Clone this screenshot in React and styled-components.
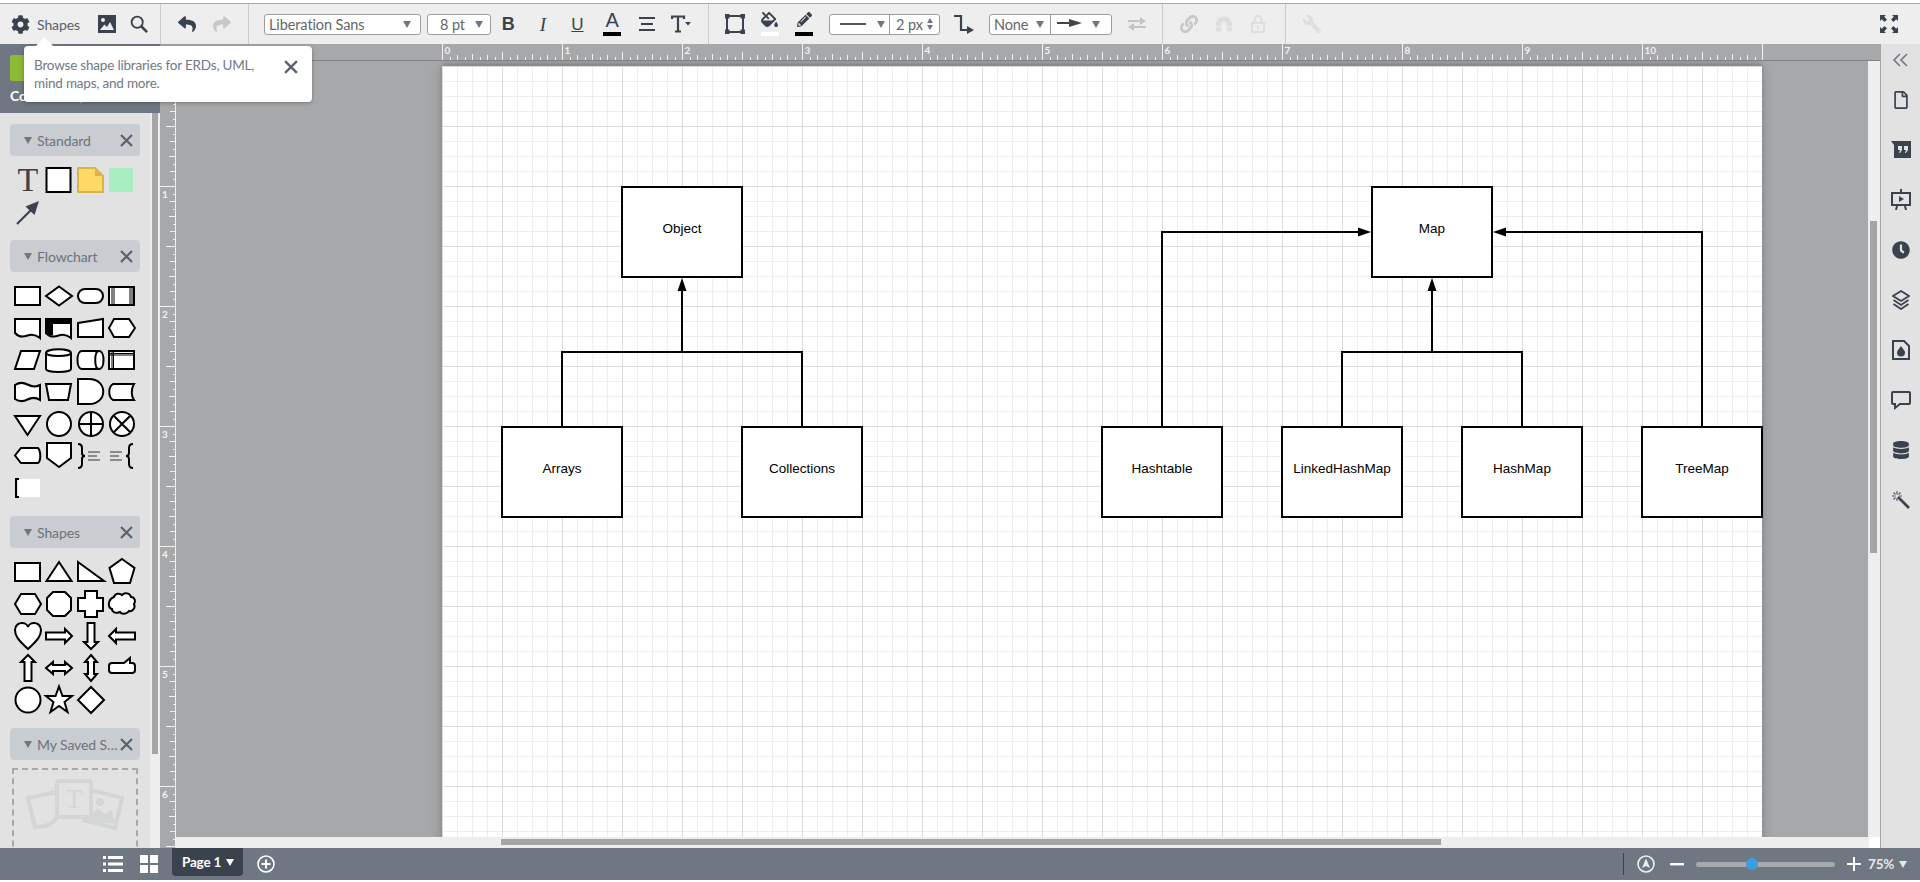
import React from "react";
import styled, { createGlobalStyle } from "styled-components";
import {
  FaCog,
  FaReply,
  FaShare,
  FaFillDrip,
  FaPencilAlt,
  FaLink,
  FaMagnet,
  FaWrench,
  FaRegFile,
  FaClock,
  FaDatabase
} from "react-icons/fa";

const UI_FONT = `"Lato", "Noto Sans", sans-serif`;
const DARK = "#3a424e";

const GlobalStyle = createGlobalStyle`
  html, body { margin: 0; padding: 0; height: 100%; overflow: hidden; background: #fff; }
  body { font-family: ${UI_FONT}; }
  * { box-sizing: border-box; }
`;

const Screen = styled.div`
  display: flex;
  flex-direction: column;
  width: 1920px;
  height: 882px;
  overflow: hidden;
  position: relative;
  background: #fff;
`;

/* ---------- toolbar ---------- */

const Toolbar = styled.div`
  display: flex;
  flex: none;
  height: 42px;
  margin-top: 3px;
  margin-bottom: -1px;
  background: #eee;
  border-top: 1px solid #aaa;
  border-bottom: 1px solid #999;
`;

const Group = styled.div`
  display: flex;
  align-items: center;
  flex: ${p => (p.$grow ? "1" : "none")};
  width: ${p => (p.$w ? `${p.$w}px` : "auto")};
  padding-left: ${p => p.$pad || 0}px;
  padding-right: ${p => p.$padRight || 0}px;
  border-right: ${p => (p.$grow ? "none" : "1px solid #ccc")};
`;

const ToolButton = styled.div`
  display: flex;
  align-items: center;
  justify-content: center;
  position: relative;
  flex: none;
  width: ${p => p.$w || 34.6}px;
  height: 40px;
  color: ${p => p.$color || DARK};
  font-size: ${p => p.$size || 18}px;
  margin-left: ${p => p.$left || 0}px;
`;

const ShapesLabel = styled.span`
  font-size: 14px;
  letter-spacing: -0.1px;
  color: #59616e;
  width: 42px;
  flex: none;
`;

const SelectBox = styled.div`
  display: flex;
  align-items: center;
  flex: none;
  width: ${p => p.$w}px;
  height: 21px;
  margin-left: ${p => p.$left || 0}px;
  background: #fff;
  border: 1px solid #9d9d9d;
  border-radius: 3px;
  font-size: 14.5px;
  letter-spacing: -0.1px;
  color: #666;
  overflow: hidden;
`;

const SelectPart = styled.div`
  display: flex;
  align-items: center;
  justify-content: space-between;
  height: 100%;
  flex: ${p => (p.$w ? "none" : "1")};
  width: ${p => (p.$w ? `${p.$w}px` : "auto")};
  padding: 0 ${p => p.$padRight || 9}px 0 ${p => p.$pad || 4}px;
  border-right: ${p => (p.$split ? "1px solid #9d9d9d" : "none")};
`;

const Caret = styled.i`
  flex: none;
  display: block;
  width: 0;
  height: 0;
  border-left: 4px solid transparent;
  border-right: 4px solid transparent;
  border-top: 7px solid ${p => p.$color || "#6f7783"};
`;

const Stepper = styled.div`
  display: flex;
  flex-direction: column;
  gap: 2px;
  & > i {
    display: block;
    width: 0;
    height: 0;
    border-left: 3px solid transparent;
    border-right: 3px solid transparent;
  }
  & > i:first-child { border-bottom: 5px solid #6f7783; }
  & > i:last-child { border-top: 5px solid #6f7783; }
`;

const Glyph = styled.span`
  font-family: ${p => p.$family || `"Liberation Sans", sans-serif`};
  font-size: ${p => p.$size || 17}px;
  font-weight: ${p => (p.$bold ? 700 : 400)};
  font-style: ${p => (p.$italic ? "italic" : "normal")};
  text-decoration: ${p => (p.$under ? "underline" : "none")};
  margin-bottom: ${p => p.$lift || 0}px;
  color: ${DARK};
  line-height: 1;
`;

const ColorBar = styled.i`
  position: absolute;
  left: 50%;
  bottom: 8px;
  width: 18px;
  height: 4px;
  margin-left: -9px;
  background: ${p => p.$color};
`;

const Lifted = styled.span`
  display: flex;
  margin-bottom: 9px;
`;

/* ---------- sidebar ---------- */

const Main = styled.div`
  display: flex;
  flex: 1;
  min-height: 0;
`;

const Sidebar = styled.div`
  display: flex;
  flex-direction: column;
  flex: none;
  width: 160px;
  background: #e2e2e2;
`;

const DocHeader = styled.div`
  flex: none;
  height: 69px;
  padding: 11px 10px 0;
  background: #6f7783;
  color: #fff;
`;

const DocLogo = styled.div`
  width: 40px;
  height: 26px;
  background: #8dbb35;
  border-radius: 2px;
`;

const DocTitle = styled.div`
  margin-top: 6px;
  font-size: 14px;
  font-weight: 700;
  white-space: nowrap;
`;

const SidebarBody = styled.div`
  display: flex;
  flex: 1;
  min-height: 0;
`;

const LibraryList = styled.div`
  flex: 1;
  padding: 11px 10px 0;
  overflow: hidden;
`;

const SideScroll = styled.div`
  flex: none;
  width: 10px;
  padding: 0 2px;
  background: #eee;
`;

const SideThumb = styled.div`
  height: 641px;
  background: #a5a5a5;
`;

const LibHeader = styled.div`
  display: flex;
  align-items: center;
  height: 32px;
  padding: 0 7px 0 14px;
  background: #c9ccd0;
  border-radius: 4px;
  color: #6d737d;
  font-size: 14px;
  letter-spacing: -0.1px;
`;

const LibName = styled.span`
  flex: 1;
  margin-left: 5px;
  white-space: nowrap;
`;

const Cross = styled.svg`
  display: block;
  flex: none;
  fill: none;
  stroke: #5c626b;
  stroke-width: 2.2;
`;

const ShapeGrid = styled.div`
  display: grid;
  grid-template-columns: repeat(4, 31.4px);
  grid-auto-rows: 32px;
  margin: 0 -10px 0 2px;
  padding: 8px 0 12px;
`;

const ShapeSvg = styled.svg`
  display: block;
  width: 32px;
  height: 32px;
  overflow: visible;
  fill: #fff;
  stroke: #000;
  stroke-width: 2;
  stroke-linejoin: miter;
`;

const TextTool = styled.div`
  width: 32px;
  height: 32px;
  text-align: center;
  font-family: "Liberation Serif", serif;
  font-size: 34px;
  line-height: 32px;
  color: ${DARK};
`;

const DropBox = styled.div`
  height: 120px;
  margin: 8px 2px 0;
  padding-top: 8px;
  border: 2px dashed #a8a8a8;
  text-align: center;
  font-size: 14px;
  color: #8a8f96;
  white-space: nowrap;
  overflow: hidden;
`;

const DropArt = styled.svg`
  display: block;
  width: 100px;
  height: 54px;
  margin: 0 auto 12px;
`;

/* ---------- tooltip ---------- */

const Tip = styled.div`
  position: absolute;
  left: 24px;
  top: 46px;
  width: 288px;
  height: 56px;
  padding: 10px;
  background: #fff;
  border-radius: 4px;
  box-shadow: 0 1px 4px rgba(0, 0, 0, 0.3);
  font-size: 13.5px;
  letter-spacing: -0.2px;
  line-height: 18px;
  color: #717987;
  z-index: 5;
  &::before {
    content: "";
    position: absolute;
    left: 14px;
    top: -6px;
    width: 13px;
    height: 13px;
    background: #fff;
    transform: rotate(45deg);
  }
`;

const TipText = styled.div`
  position: relative;
  width: 240px;
`;

const TipClose = styled.span`
  position: absolute;
  right: 14px;
  top: 14px;
`;

/* ---------- canvas ---------- */

const Workspace = styled.div`
  flex: 1;
  min-width: 0;
  display: grid;
  grid-template-columns: 16px 1fr 12px;
  grid-template-rows: 17px 1fr 11px;
`;

const HRuler = styled.svg`
  grid-column: 1 / 4;
  display: block;
  width: 1720px;
  height: 17px;
  background: #a7a8aa;
  border-bottom: 1px solid #808184;
`;

const VRuler = styled.svg`
  grid-row: 2 / 4;
  display: block;
  width: 16px;
  height: 787px;
  background: #a7a8aa;
`;

const RulerText = styled.text`
  font-family: ${UI_FONT};
  font-size: 10px;
  font-weight: 700;
  fill: #f2f2f2;
`;

const Viewport = styled.div`
  position: relative;
  overflow: hidden;
  background: #a7a8aa;
  padding: 5px 0 0 266px;
`;

const Page = styled.div`
  position: relative;
  width: 1320px;
  height: 1100px;
  background-color: #fff;
  background-image:
    linear-gradient(to right, #dcdcdc 1px, transparent 1px),
    linear-gradient(to bottom, #dcdcdc 1px, transparent 1px),
    linear-gradient(to right, #eee 1px, transparent 1px),
    linear-gradient(to bottom, #eee 1px, transparent 1px);
  background-size: 60px 60px, 60px 60px, 15px 15px, 15px 15px;
  box-shadow: 0 0 12px rgba(0, 0, 0, 0.22), 0 -3px 3px rgba(0, 0, 0, 0.1);
`;

const Wires = styled.svg`
  position: absolute;
  left: 0;
  top: 0;
  width: 1320px;
  height: 600px;
  fill: none;
  stroke: #000;
  stroke-width: 2;
`;

const Node = styled.div`
  position: absolute;
  left: ${p => p.$x - 1}px;
  top: ${p => p.$y}px;
  width: 122px;
  height: 92px;
  display: flex;
  align-items: center;
  justify-content: center;
  padding-bottom: 7px;
  background: #fff;
  border: 2px solid #000;
  font-family: "Liberation Sans", Arial, sans-serif;
  font-size: 13.5px;
  color: #000;
`;

const VScroll = styled.div`
  padding: 160px 3px 0 2px;
  background: #eee;
`;

const VThumb = styled.div`
  height: 332px;
  background: #a5a5a5;
`;

const HScroll = styled.div`
  padding: 2px 0 3px 325px;
  background: #eee;
`;

const HThumb = styled.div`
  width: 940px;
  height: 6px;
  background: #a5a5a5;
`;

const Corner = styled.div`
  background: #fff;
  border-left: 1px solid #eee;
`;

/* ---------- right rail ---------- */

const Rail = styled.div`
  flex: none;
  width: 40px;
  background: #e2e2e2;
  border-left: 1px solid #a5a5a5;
  color: ${DARK};
`;

const RailToggle = styled.div`
  display: flex;
  align-items: center;
  justify-content: center;
  height: 31px;
  color: #6f7783;
`;

const RailItem = styled.div`
  display: flex;
  align-items: center;
  justify-content: center;
  height: 50px;
  font-size: 18px;
`;

/* ---------- bottom bar ---------- */

const BottomBar = styled.div`
  display: flex;
  align-items: flex-start;
  flex: none;
  height: 32px;
  padding-left: 95px;
  background: #6f7783;
  color: #fff;
`;

const BarButton = styled.div`
  display: flex;
  align-items: center;
  justify-content: center;
  flex: none;
  width: ${p => p.$w || 36}px;
  height: 32px;
  margin-left: ${p => p.$left || 0}px;
`;

const PageTab = styled.div`
  display: flex;
  align-items: center;
  flex: none;
  gap: 5px;
  width: 71px;
  height: 28px;
  margin-left: 5px;
  padding-left: 10px;
  background: ${DARK};
  border-radius: 0 0 4px 4px;
  font-size: 13.5px;
  font-weight: 700;
  letter-spacing: -0.2px;
`;

const ZoomTools = styled.div`
  display: flex;
  align-items: center;
  height: 32px;
  margin-left: auto;
  padding-right: 13px;
`;

const BarRule = styled.i`
  display: block;
  width: 1px;
  height: 22px;
  background: #3a424e;
`;

const SliderTrack = styled.div`
  position: relative;
  flex: none;
  width: 139px;
  height: 5px;
  margin-left: 10px;
  background: #a5a8ad;
  border-radius: 3px;
`;

const SliderThumb = styled.i`
  position: absolute;
  left: 40%;
  top: -4px;
  width: 12px;
  height: 12px;
  margin-left: -6px;
  background: #3a9fe0;
  border-radius: 50%;
`;

const ZoomValue = styled.span`
  flex: none;
  width: 27px;
  margin: 0 4px 0 5px;
  font-size: 13.5px;
  font-weight: 700;
  letter-spacing: -0.2px;
  color: #e8e8e8;
`;

const BottomEdge = styled.div`
  flex: none;
  height: 2px;
  background: #fff;
`;

/* ---------- drawings ---------- */

const Ico = ({ w = 20, h = 20, vb = "0 0 20 20", children, color = "currentColor" }) => (
  <svg width={w} height={h} viewBox={vb} fill={color} stroke="none" style={{ display: "block" }}>
    {children}
  </svg>
);

const CloseMark = ({ size = 13 }) => (
  <Cross width={size} height={size} viewBox="0 0 13 13">
    <path d="M1 1L12 12M12 1L1 12" />
  </Cross>
);

const bracket = d => <path d={d} fill="none" strokeWidth="2" />;
const grayLines = x => (
  <path stroke="#8a8a8a" strokeWidth="1.8" fill="none" d={`M${x} 12h12M${x} 16h9M${x} 20h12`} />
);

const STANDARD = [
  <TextTool key="t">T</TextTool>,
  <ShapeSvg key="r"><rect x="3.5" y="4" width="24" height="24" /></ShapeSvg>,
  <ShapeSvg key="n" style={{ stroke: "#d9b44a" }}>
    <path d="M3 4H20L28 12V28H3Z" fill="#ffd966" />
    <path d="M20 4V12H28Z" fill="#d9b44a" stroke="none" />
  </ShapeSvg>,
  <ShapeSvg key="g" style={{ stroke: "none" }}><rect x="3" y="4" width="24" height="24" fill="#a9eec0" /></ShapeSvg>,
  <ShapeSvg key="a" style={{ stroke: DARK, fill: DARK }}>
    <path d="M5 28L20 13" strokeWidth="2.2" fill="none" />
    <path d="M27 5L22.5 19L13.5 10.5Z" stroke="none" />
  </ShapeSvg>
];

const FLOWCHART = [
  <rect x="3" y="7" width="25" height="18" />,
  <path d="M16 6.5L29 16L16 25.5L3 16Z" />,
  <rect x="3" y="9" width="25" height="14" rx="7" />,
  <g><rect x="3" y="7" width="25" height="18" /><path d="M6 7V25M8 7V25M24 7V25M26 7V25" strokeWidth="1" /></g>,
  <path d="M3 7H28V26Q22 21 15.5 23.5Q8 26.5 3 21Z" />,
  <g><path d="M3 7H28V26Q22 21 15.5 23.5Q8 26.5 3 21Z" /><path d="M3 7H28V11H9V22H6L3 21Z" fill="#000" /></g>,
  <path d="M3 11L28 7V25H3Z" />,
  <path d="M8 7H23L29 16L23 25H8L3 16Z" />,
  <path d="M9 7H28L22 25H3Z" />,
  <g><path d="M3 9C3 4 28 4 28 9V25C28 29 3 29 3 25Z" /><path d="M3 9C3 13 28 13 28 9" fill="none" /></g>,
  <g><path d="M7 7H24C30 7 30 25 24 25H7C1 25 1 7 7 7Z" /><path d="M24 7C19 7 19 25 24 25" fill="none" /></g>,
  <g><rect x="3" y="7" width="25" height="18" /><path d="M3 9.5H28M3 11H28M6 7V25M7.5 7V25" fill="none" strokeWidth="1" /></g>,
  <path d="M3 9Q9 5 15.5 8.5Q22 12 28 9V24Q22 20 15.5 23.5Q9 27 3 23Z" />,
  <path d="M3 8H28L25 24H6Z" />,
  <path d="M3 3H14C33 3 33 28 14 28H3Z" />,
  <path d="M7 8H28C25 13 25 20 28 24H7C2 21 2 11 7 8Z" />,
  <path d="M3 8H28L15.5 27Z" />,
  <circle cx="16" cy="16" r="12" />,
  <g><circle cx="16" cy="16" r="12" /><path d="M16 4V28M4 16H28" fill="none" /></g>,
  <g><circle cx="16" cy="16" r="12" /><path d="M7.5 7.5L24.5 24.5M24.5 7.5L7.5 24.5" fill="none" /></g>,
  <path d="M9 8H26C29 11 29 21 26 23H9L3 15.5Z" />,
  <path d="M4 3H28V18L16 27L4 18Z" />,
  <g>{bracket("M3 4Q7 4 7 8V13Q7 16 10 16Q7 16 7 19V24Q7 28 3 28")}{grayLines(13)}</g>,
  <g>{grayLines(4)}{bracket("M27 4Q23 4 23 8V13Q23 16 20 16Q23 16 23 19V24Q23 28 27 28")}</g>,
  <g><rect x="6" y="7" width="22" height="18" stroke="none" /><path d="M7 7H4V25H7" fill="none" strokeWidth="2" /></g>
];

const SHAPES = [
  <rect x="3" y="7" width="25" height="18" />,
  <path d="M16 6L28.5 25H3.5Z" />,
  <path d="M3 6L29 25H3Z" />,
  <path d="M16 3L28.5 12L24 27H8L3.5 12Z" />,
  <path d="M9 6H23L29 16L23 26H9L3 16Z" />,
  <path d="M10 4H22L28 10V22L22 28H10L4 22V10Z" />,
  <path d="M10 3H22V10H28V23H22V29H10V23H3V10H10Z" />,
  <path d="M8 9C9 5 14 5 16 7C19 4 24 5 25 9C29 9 30 14 28 16C30 20 26 24 23 23C20 27 15 26 14 24C10 26 6 24 6 21C2 20 1 12 8 9Z" />,
  <path d="M16 29C5 19 3 15 3 10C3 5 7 3 10 3C13 3 15.5 5 16 7C16.5 5 19 3 22 3C25 3 29 5 29 10C29 15 27 19 16 29Z" />,
  <path d="M3 12.5H22V9L29 16L22 23V19.5H3Z" />,
  <path d="M12.5 3H19.5V22H23L16 29L9 22H12.5Z" />,
  <path d="M29 12.5H10V9L3 16L10 23V19.5H29Z" />,
  <path d="M12.5 29H19.5V10H23L16 3L9 10H12.5Z" />,
  <path d="M3 16L10 10V13H22V10L29 16L22 22V19H10V22Z" />,
  <path d="M16 3L22 10H19V22H22L16 29L10 22H13V10H10Z" />,
  <path d="M6 11H18L24 6V11H26Q29 11 29 14V18Q29 21 26 21H6Q3 21 3 18V14Q3 11 6 11Z" />,
  <circle cx="16" cy="16" r="12.5" />,
  <path d="M16 2.5L19.5 12H29L21.5 18L24.5 28L16 22L7.5 28L10.5 18L3 12H12.5Z" />,
  <path d="M16 3L29 16L16 29L3 16Z" />
];

const RulerTop = () => {
  const origin = 282;
  const ticks = [];
  for (let i = 0; i <= 176; i++) {
    const x = Math.round(origin + i * 7.5) + 0.5;
    const inch = i % 16 === 0;
    const h = inch ? 16 : i % 8 === 0 ? 8 : i % 4 === 0 ? 6 : i % 2 === 0 ? 5 : 3;
    ticks.push(<line key={i} x1={x} x2={x} y1={16 - h} y2={16} stroke="#f2f2f2" />);
    if (inch && i < 176) {
      ticks.push(
        <RulerText key={`l${i}`} x={x + 2} y={10}>
          {i / 16}
        </RulerText>
      );
    }
  }
  return <HRuler>{ticks}</HRuler>;
};

const RulerLeft = () => {
  const origin = 5;
  const ticks = [];
  for (let i = 0; i <= 104; i++) {
    const y = Math.round(origin + i * 7.5) + 0.5;
    const inch = i % 16 === 0;
    const h = inch ? 16 : i % 8 === 0 ? 10 : i % 4 === 0 ? 7 : i % 2 === 0 ? 6 : 3;
    ticks.push(<line key={i} x1={16 - h} x2={16} y1={y} y2={y} stroke="#f2f2f2" />);
    if (inch && i > 0) {
      ticks.push(
        <RulerText key={`l${i}`} x={2} y={y + 11}>
          {i / 16}
        </RulerText>
      );
    }
  }
  return (
    <VRuler>
      <line x1="15.5" x2="15.5" y1="0" y2="787" stroke="#f2f2f2" />
      {ticks}
    </VRuler>
  );
};

const NODES = [
  ["Object", 180, 120],
  ["Arrays", 60, 360],
  ["Collections", 300, 360],
  ["Map", 930, 120],
  ["Hashtable", 660, 360],
  ["LinkedHashMap", 840, 360],
  ["HashMap", 1020, 360],
  ["TreeMap", 1200, 360]
];

const Library = ({ name, children }) => (
  <>
    <LibHeader>
      <Caret />
      <LibName>{name}</LibName>
      <CloseMark />
    </LibHeader>
    {children}
  </>
);

const App = () => (
  <Screen>
    <GlobalStyle />

    <Toolbar>
      <Group $w={161} $pad={3}>
        <ToolButton $w={34} $size={19}><FaCog /></ToolButton>
        <ShapesLabel>Shapes</ShapesLabel>
        <ToolButton $w={46} $left={5}>
          <Ico w={18} h={18} vb="0 0 18 18">
            <path fill={DARK} d="M0 0H18V18H0Z" />
            <circle cx="5" cy="5" r="2" fill="#eee" />
            <path fill="#eee" d="M2 15L6.5 9.5L9 12L12 7L16 15Z" />
          </Ico>
        </ToolButton>
        <ToolButton $w={18}>
          <Ico w={20} h={20} vb="0 0 20 20">
            <circle cx="8" cy="8" r="6.2" fill="none" stroke={DARK} strokeWidth="2" />
            <path stroke={DARK} strokeWidth="2.8" d="M12.5 12.5L19 19" />
          </Ico>
        </ToolButton>
      </Group>

      <Group $w={88} $pad={9}>
        <ToolButton $size={18}><FaReply /></ToolButton>
        <ToolButton $size={18} $color="#c8c8c8"><FaShare /></ToolButton>
      </Group>

      <Group $w={460} $pad={15}>
        <SelectBox $w={157}>
          <SelectPart>Liberation Sans<Caret /></SelectPart>
        </SelectBox>
        <SelectBox $w={64} $left={6}>
          <SelectPart $pad={12} $padRight={7}>8 pt<Caret /></SelectPart>
        </SelectBox>
        <ToolButton><Glyph $bold $size={18}>B</Glyph></ToolButton>
        <ToolButton><Glyph $italic $family={`"Liberation Serif", serif`} $size={19}>I</Glyph></ToolButton>
        <ToolButton><Glyph $under $size={17}>U</Glyph></ToolButton>
        <ToolButton>
          <Glyph $size={20} $lift={9}>A</Glyph>
          <ColorBar $color="#000" />
        </ToolButton>
        <ToolButton>
          <Ico w={18} h={16} vb="0 0 18 16">
            <path stroke={DARK} strokeWidth="2" d="M1 2H17M3 8H15M1 14H17" />
          </Ico>
        </ToolButton>
        <ToolButton>
          <Ico w={20} h={18} vb="0 0 20 18">
            <path fill="none" stroke={DARK} strokeWidth="2.2" d="M1 4V1.5H13V4M7 1.5V16.5M4 16.5H10" />
            <path fill={DARK} d="M14 7H20L17 10.5Z" />
          </Ico>
        </ToolButton>
      </Group>

      <Group $w={454} $pad={9}>
        <ToolButton>
          <Ico w={20} h={20} vb="0 0 20 20">
            <path fill="none" stroke={DARK} strokeWidth="2" d="M2 2H18V18H2Z" />
            <path fill={DARK} d="M0 0H4.5V4.5H0ZM15.5 0H20V4.5H15.5ZM0 15.5H4.5V20H0ZM15.5 15.5H20V20H15.5Z" />
          </Ico>
        </ToolButton>
        <ToolButton $size={17}>
          <Lifted><FaFillDrip /></Lifted>
          <ColorBar $color="#fff" />
        </ToolButton>
        <ToolButton $size={15}>
          <Lifted><FaPencilAlt /></Lifted>
          <ColorBar $color="#000" />
        </ToolButton>
        <SelectBox $w={111} $left={7.2}>
          <SelectPart $w={60} $split $pad={10} $padRight={4}>
            <Ico w={26} h={4} vb="0 0 26 4"><path stroke="#555" strokeWidth="2" d="M0 2H26" /></Ico>
            <Caret />
          </SelectPart>
          <SelectPart $pad={6} $padRight={6}>
            2 px
            <Stepper><i /><i /></Stepper>
          </SelectPart>
        </SelectBox>
        <ToolButton $w={49}>
          <Ico w={20} h={20} vb="0 0 20 20">
            <path fill="none" stroke={DARK} strokeWidth="2.2" d="M0 2H7V16H14" />
            <path fill={DARK} d="M13 12L20 16L13 20Z" />
          </Ico>
        </ToolButton>
        <SelectBox $w={123}>
          <SelectPart $w={61} $split $padRight={6}>None<Caret /></SelectPart>
          <SelectPart $pad={6} $padRight={11}>
            <Ico w={25} h={10} vb="0 0 25 10">
              <path stroke="#444" strokeWidth="2" d="M0 4H14" />
              <path fill="#444" d="M12 0L25 4L12 8Z" />
            </Ico>
            <Caret />
          </SelectPart>
        </SelectBox>
        <ToolButton $w={50}>
          <Ico w={18} h={14} vb="0 0 18 14">
            <path stroke="#c4c4c4" strokeWidth="2" d="M0 4H15M18 10H3" />
            <path fill="#c4c4c4" d="M12 0L18 4L12 8ZM6 6L0 10L6 14Z" />
          </Ico>
        </ToolButton>
      </Group>

      <Group $w={123} $pad={9}>
        <ToolButton $color="#c8c8c8" $size={18}><FaLink /></ToolButton>
        <ToolButton $color="#dedede" $size={16}><FaMagnet style={{ transform: "rotate(180deg)" }} /></ToolButton>
        <ToolButton>
          <Ico w={14} h={18} vb="0 0 14 18">
            <path fill="none" stroke="#dedede" strokeWidth="2" d="M1 8H13V17H1ZM3.5 8V4.5Q3.5 1 7 1Q10.5 1 10.5 4.5V8M7 11V14" />
          </Ico>
        </ToolButton>
      </Group>

      <Group $grow $pad={9} $padRight={14}>
        <ToolButton $color="#dedede" $size={18}><FaWrench style={{ transform: "scaleX(-1)" }} /></ToolButton>
        <ToolButton style={{ marginLeft: "auto" }}>
          <Ico w={18} h={18} vb="0 0 18 18">
            <path fill={DARK} d="M0 0H6L4.2 1.8L7 4.6L4.6 7L1.8 4.2L0 6ZM18 0V6L16.2 4.2L13.4 7L11 4.6L13.8 1.8L12 0ZM0 18V12L1.8 13.8L4.6 11L7 13.4L4.2 16.2L6 18ZM18 18H12L13.8 16.2L11 13.4L13.4 11L16.2 13.8L18 12Z" />
          </Ico>
        </ToolButton>
      </Group>
    </Toolbar>

    <Main>
      <Sidebar>
        <DocHeader>
          <DocLogo />
          <DocTitle>Collections, Java</DocTitle>
        </DocHeader>
        <SidebarBody>
          <LibraryList>
            <Library name="Standard">
              <ShapeGrid>{STANDARD}</ShapeGrid>
            </Library>
            <Library name="Flowchart">
              <ShapeGrid>
                {FLOWCHART.map((s, i) => <ShapeSvg key={i}>{s}</ShapeSvg>)}
              </ShapeGrid>
            </Library>
            <Library name="Shapes">
              <ShapeGrid>
                {SHAPES.map((s, i) => <ShapeSvg key={i}>{s}</ShapeSvg>)}
              </ShapeGrid>
            </Library>
            <Library name="My Saved S…">
              <DropBox>
                <DropArt viewBox="0 0 100 54">
                  <path fill="none" stroke="#d3d5d7" strokeWidth="4" d="M32 14L3 20L10 49Q24 50 32 40" />
                  <path fill="none" stroke="#d3d5d7" strokeWidth="4" d="M66 12L97 20L90 50L58 42" />
                  <rect x="32" y="3" width="34" height="36" rx="2" fill="none" stroke="#d3d5d7" strokeWidth="4" />
                  <text x="49" y="30" textAnchor="middle" fontFamily="Liberation Serif" fontSize="28" fill="#d3d5d7">T</text>
                  <circle cx="75" cy="24" r="4" fill="#d3d5d7" />
                  <path fill="#d3d5d7" d="M60 42L73 30L80 36L86 32L91 46Z" />
                </DropArt>
                Drop shapes to save
              </DropBox>
            </Library>
          </LibraryList>
          <SideScroll><SideThumb /></SideScroll>
        </SidebarBody>
      </Sidebar>

      <Workspace>
        <RulerTop />
        <RulerLeft />
        <Viewport>
          <Page>
            <Wires viewBox="0 0 1320 600">
              <path d="M120 360V286H360V360M240 286V224" />
              <path d="M240 212L235.5 225H244.5Z" fill="#000" stroke="none" />
              <path d="M900 360V286H1080V360M990 286V224" />
              <path d="M990 212L985.5 225H994.5Z" fill="#000" stroke="none" />
              <path d="M720 360V166H917" />
              <path d="M929 166L916 161.5V170.5Z" fill="#000" stroke="none" />
              <path d="M1260 360V166H1063" />
              <path d="M1051 166L1064 161.5V170.5Z" fill="#000" stroke="none" />
            </Wires>
            {NODES.map(([label, x, y]) => (
              <Node key={label} $x={x} $y={y}>{label}</Node>
            ))}
          </Page>
        </Viewport>
        <VScroll><VThumb /></VScroll>
        <HScroll><HThumb /></HScroll>
        <Corner />
      </Workspace>

      <Rail>
        <RailToggle>
          <Ico w={17} h={14} vb="0 0 17 14">
            <path fill="none" stroke="currentColor" strokeWidth="1.6" d="M8 1L2 7L8 13M15 1L9 7L15 13" />
          </Ico>
        </RailToggle>
        <RailItem><FaRegFile /></RailItem>
        <RailItem>
          <Ico w={20} h={18} vb="0 0 20 18">
            <path fill={DARK} d="M0 0H20V17H3V4Z" />
            <path fill="#e2e2e2" d="M7 5H11V9L9 12H8L9 9H7ZM13 5H17V9L15 12H14L15 9H13Z" />
          </Ico>
        </RailItem>
        <RailItem>
          <Ico w={20} h={22} vb="0 0 20 22">
            <path fill="none" stroke={DARK} strokeWidth="2" d="M1 4H19V16H1Z" />
            <path fill={DARK} d="M9 0H11V4H9ZM8 7L13 10L8 13ZM5 17H7L6 21H4ZM13 17H15L16 21H14Z" />
          </Ico>
        </RailItem>
        <RailItem><FaClock /></RailItem>
        <RailItem>
          <Ico w={18} h={20} vb="0 0 18 20">
            <path fill="#fff0" stroke={DARK} strokeWidth="1.8" d="M9 1L17 6L9 11L1 6Z" />
            <path fill="none" stroke={DARK} strokeWidth="1.8" d="M1.5 10L9 15L16.5 10M1.5 14L9 19L16.5 14" />
          </Ico>
        </RailItem>
        <RailItem>
          <Ico w={18} h={20} vb="0 0 18 20">
            <path fill="none" stroke={DARK} strokeWidth="2" d="M1 1H12L17 6V19H1Z" />
            <path fill={DARK} d="M9 6C11 9 13 10.5 13 12.5A4 4 0 0 1 5 12.5C5 10.5 7 9 9 6Z" />
          </Ico>
        </RailItem>
        <RailItem>
          <Ico w={20} h={19} vb="0 0 20 19">
            <path fill="none" stroke={DARK} strokeWidth="2" d="M2 1H18Q19 1 19 2V12Q19 13 18 13H9L4 17V13H2Q1 13 1 12V2Q1 1 2 1Z" />
          </Ico>
        </RailItem>
        <RailItem><FaDatabase /></RailItem>
        <RailItem>
          <Ico w={18} h={18} vb="0 0 18 18">
            <path stroke={DARK} strokeWidth="2.6" d="M6 6L17 17" />
            <path stroke="#555d69" strokeWidth="1.2" d="M5 0V3.5M5 7V10M0 5H3.5M7 5H10M1.5 1.5L3.5 3.5M8.5 1.5L6.5 3.5M1.5 8.5L3.5 6.5" />
          </Ico>
        </RailItem>
      </Rail>
    </Main>

    <BottomBar>
      <BarButton>
        <Ico w={20} h={18} vb="0 0 20 18">
          <path fill="#fff" d="M0 1H3V4H0ZM5 1H20V4H5ZM0 7.5H3V10.5H0ZM5 7.5H20V10.5H5ZM0 14H3V17H0ZM5 14H20V17H5Z" />
        </Ico>
      </BarButton>
      <BarButton>
        <Ico w={18} h={18} vb="0 0 18 18">
          <path fill="#fff" d="M0 0H8V8H0ZM10 0H18V8H10ZM0 10H8V18H0ZM10 10H18V18H10Z" />
        </Ico>
      </BarButton>
      <PageTab>Page 1<Caret $color="#fff" /></PageTab>
      <BarButton $left={5}>
        <Ico w={18} h={18} vb="0 0 18 18">
          <circle cx="9" cy="9" r="8" fill="none" stroke="#fff" strokeWidth="1.6" />
          <path stroke="#fff" strokeWidth="2" d="M9 4.5V13.5M4.5 9H13.5" />
        </Ico>
      </BarButton>
      <ZoomTools>
        <BarRule />
        <BarButton $w={44}>
          <Ico w={18} h={18} vb="0 0 18 18">
            <circle cx="9" cy="9" r="8" fill="none" stroke="#eee" strokeWidth="1.6" />
            <path fill="#eee" d="M9 3.5L13 13L9 11L5 13Z" />
          </Ico>
        </BarButton>
        <BarButton $w={18}>
          <Ico w={14} h={3} vb="0 0 14 3"><path fill="#fff" d="M0 0H14V2.4H0Z" /></Ico>
        </BarButton>
        <SliderTrack><SliderThumb /></SliderTrack>
        <BarButton $w={18} $left={10}>
          <Ico w={14} h={14} vb="0 0 14 14">
            <path stroke="#fff" strokeWidth="2" d="M7 0V14M0 7H14" />
          </Ico>
        </BarButton>
        <ZoomValue>75%</ZoomValue>
        <Caret $color="#e8e8e8" />
      </ZoomTools>
    </BottomBar>
    <BottomEdge />

    <Tip>
      <TipText>Browse shape libraries for ERDs, UML, mind maps, and more.</TipText>
      <TipClose><CloseMark size={14} /></TipClose>
    </Tip>
  </Screen>
);

export default App;
